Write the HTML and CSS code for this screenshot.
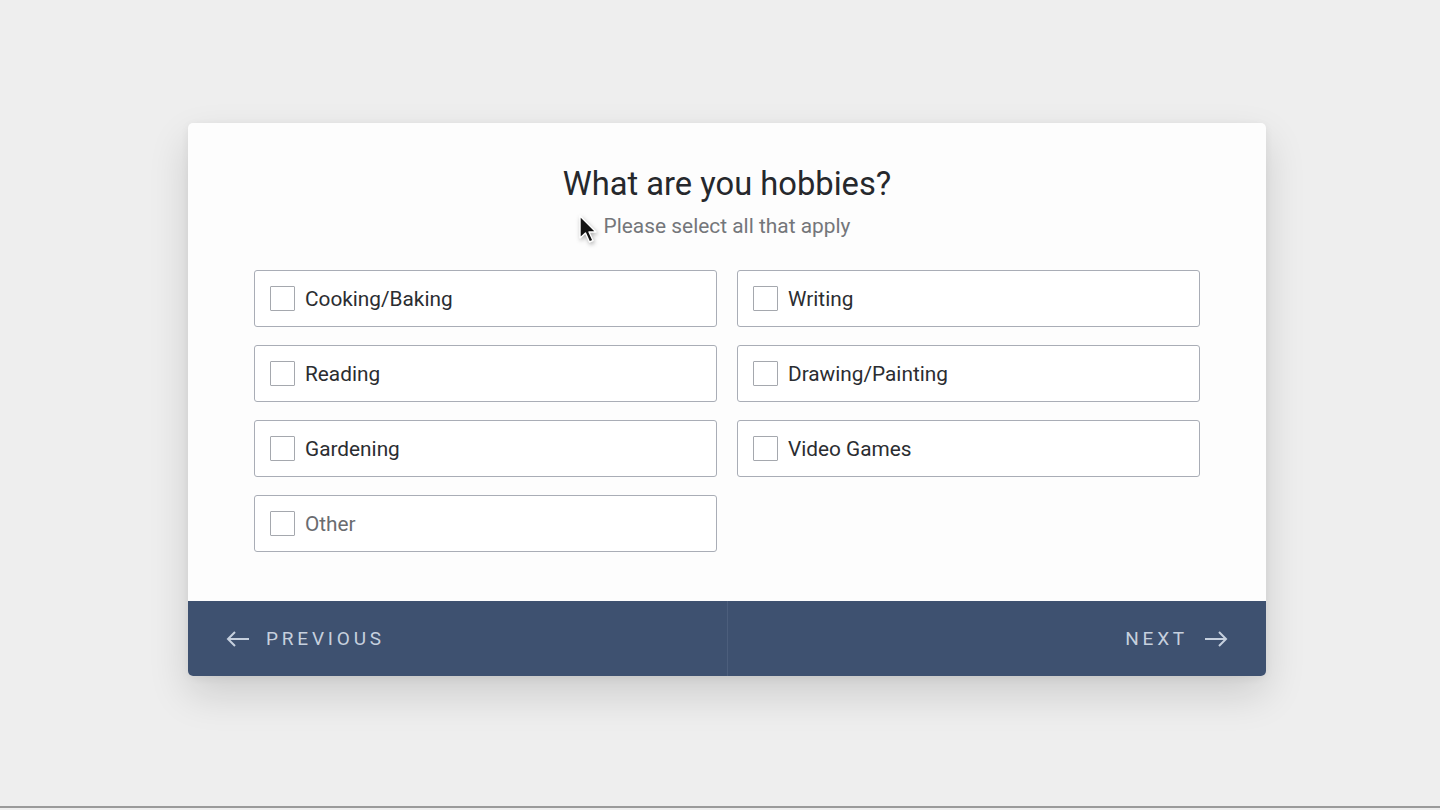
FILE: index.html
```html
<!DOCTYPE html>
<html lang="en">
<head>
    <meta charset="UTF-8">
    <title>Hobbies survey</title>
    <link rel="stylesheet" href="styles.css">
</head>
<body>
    <div class="page">
        <div class="card">
            <div class="question">
                <h1>What are you hobbies?</h1>
                <p class="hint">Please select all that apply</p>

                <div class="options">
                    <label class="option"><span class="box"></span><span>Cooking/Baking</span></label>
                    <label class="option"><span class="box"></span><span>Writing</span></label>
                    <label class="option"><span class="box"></span><span>Reading</span></label>
                    <label class="option"><span class="box"></span><span>Drawing/Painting</span></label>
                    <label class="option"><span class="box"></span><span>Gardening</span></label>
                    <label class="option"><span class="box"></span><span>Video Games</span></label>
                    <label class="option other"><span class="box"></span><span>Other</span></label>
                </div>

                <!-- mouse pointer captured in the shot -->
                <svg class="cursor" width="22" height="32" viewBox="0 0 22 32">
                    <path d="M2 2 L2 24 L7.5 19 L11.5 28 L15 26.5 L11 18 L18 18 Z" fill="#111" stroke="#fff" stroke-width="1.4" stroke-linejoin="round"/>
                </svg>
            </div>

            <div class="nav">
                <button class="nav-btn prev">
                    <svg width="24" height="16" viewBox="0 0 24 16"><path d="M23 8 H2 M9 1 L2 8 L9 15" fill="none" stroke="currentColor" stroke-width="2"/></svg>
                    <span>PREVIOUS</span>
                </button>
                <button class="nav-btn next">
                    <span>NEXT</span>
                    <svg width="24" height="16" viewBox="0 0 24 16"><path d="M1 8 H22 M15 1 L22 8 L15 15" fill="none" stroke="currentColor" stroke-width="2"/></svg>
                </button>
            </div>
        </div>
    </div>
</body>
</html>
```

FILE: styles.css
```css
html, body {
    margin: 0;
    padding: 0;
}
body {
    font-family: Roboto, "Noto Sans", Arial, sans-serif;
    background: #eeeeee;
}
.page {
    height: 808px;
    border-bottom: 2px solid #9a9a9a;
    padding-top: 123px;
    box-sizing: border-box;
}
.card {
    width: 1078px;
    margin-left: 188px;
    background: #fdfdfd;
    border-radius: 5px;
    box-shadow: 0 18px 40px rgba(0,0,0,0.14), 0 2px 8px rgba(0,0,0,0.06);
    overflow: hidden;
}
.question {
    position: relative;
    padding: 42px 66px 49px 66px;
    text-align: center;
}
h1 {
    margin: 0;
    font-size: 32.7px;
    font-weight: 400;
    color: #26282c;
    line-height: 38px;
}
.hint {
    margin: 8px 0 0 0;
    font-size: 20.9px;
    color: #74767a;
    line-height: 30px;
}
.options {
    display: grid;
    grid-template-columns: 1fr 1fr;
    column-gap: 20px;
    row-gap: 18px;
    margin-top: 29px;
    text-align: left;
}
.option {
    display: flex;
    align-items: center;
    height: 57px;
    box-sizing: border-box;
    border: 1.5px solid #a9adb6;
    border-radius: 3px;
    background: #fff;
    padding-left: 15px;
    font-size: 20.8px;
    color: #2b2d31;
    cursor: pointer;
}
.option.other {
    color: #6a6c70;
}
.box {
    width: 25px;
    height: 25px;
    box-sizing: border-box;
    border: 1.5px solid #a5a8ae;
    border-radius: 1px;
    margin-right: 10px;
    background: #fff;
}
.cursor {
    position: absolute;
    left: 390px;
    top: 91px;
    filter: drop-shadow(1px 2px 2px rgba(0,0,0,0.3));
}
.nav {
    display: flex;
    height: 75px;
    background: #3e5170;
}
.nav-btn {
    flex: 1;
    display: flex;
    align-items: center;
    gap: 16px;
    border: none;
    background: transparent;
    color: #c6d0de;
    font-family: inherit;
    font-size: 19px;
    letter-spacing: 3.8px;
    cursor: pointer;
}
.prev {
    padding-left: 38px;
    border-right: 1px solid #4c5e7c;
}
.next {
    justify-content: flex-end;
    padding-right: 38px;
}
.next span {
    margin-right: 0;
}
```
